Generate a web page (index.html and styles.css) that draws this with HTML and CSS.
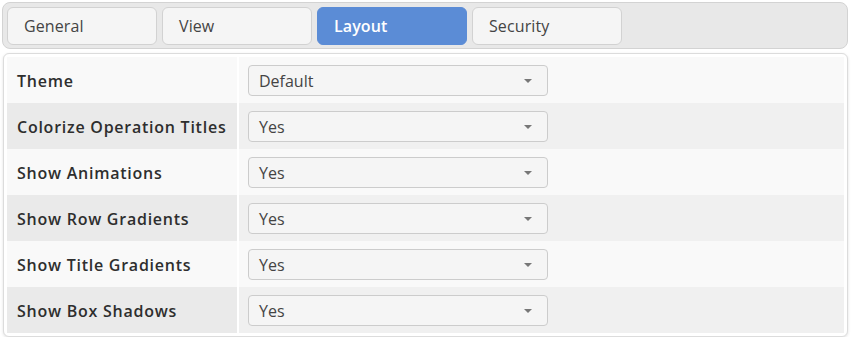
FILE: index.html
```html
<!DOCTYPE html>
<html>
<head>
<meta charset="utf-8">
<link rel="stylesheet" href="styles.css">
</head>
<body>
<div class="tabs">
  <div class="tab">General</div>
  <div class="tab">View</div>
  <div class="tab active">Layout</div>
  <div class="tab">Security</div>
</div>
<div class="panel">
  <div class="row">
    <div class="label">Theme</div>
    <div class="value"><div class="select"><span>Default</span><span class="arrow"></span></div></div>
  </div>
  <div class="row alt">
    <div class="label">Colorize Operation Titles</div>
    <div class="value"><div class="select"><span>Yes</span><span class="arrow"></span></div></div>
  </div>
  <div class="row">
    <div class="label">Show Animations</div>
    <div class="value"><div class="select"><span>Yes</span><span class="arrow"></span></div></div>
  </div>
  <div class="row alt">
    <div class="label">Show Row Gradients</div>
    <div class="value"><div class="select"><span>Yes</span><span class="arrow"></span></div></div>
  </div>
  <div class="row">
    <div class="label">Show Title Gradients</div>
    <div class="value"><div class="select"><span>Yes</span><span class="arrow"></span></div></div>
  </div>
  <div class="row alt">
    <div class="label">Show Box Shadows</div>
    <div class="value"><div class="select"><span>Yes</span><span class="arrow"></span></div></div>
  </div>
</div>
</body>
</html>
```
FILE: styles.css
```css
html, body {
  margin: 0;
  padding: 0;
  background: #ffffff;
  font-family: "Open Sans", "Noto Sans", sans-serif;
  color: #333;
}
body {
  padding: 2px 6px 0 2px;
}
.tabs {
  display: flex;
  gap: 5px;
  padding: 4px 4px 3px 4px;
  background: #e8e8e8;
  border: 1px solid #d3d3d3;
  border-radius: 8px;
}
.tab {
  box-sizing: border-box;
  width: 150px;
  height: 38px;
  padding-left: 16px;
  display: flex;
  align-items: center;
  background: #f5f5f5;
  border: 1px solid #d2d2d2;
  border-radius: 6px;
  font-size: 16px;
  letter-spacing: 0.1px;
  color: #444;
}
.tab.active {
  background: #5b8cd6;
  border-color: #5b8cd6;
  color: #fff;
  font-weight: 600;
}
.panel {
  margin: 4px 0 0 1px;
  padding: 3px 3px 3px 3px;
  background: #fff;
  border: 1px solid #dcdcdc;
  border-radius: 6px;
  box-shadow: 0 1px 3px rgba(0,0,0,0.12);
}
.row {
  display: flex;
  height: 46px;
  background: #f9f9f9;
}
.row.alt {
  background: #f0f0f0;
}
.label {
  box-sizing: border-box;
  width: 232px;
  padding-left: 10px;
  padding-top: 1px;
  display: flex;
  align-items: center;
  font-size: 16px;
  font-weight: 600;
  letter-spacing: 0.75px;
  color: #2e2e2e;
  border-right: 2px solid #fff;
}
.row.alt .label {
  background: #eaeaea;
}
.value {
  flex: 1;
  display: flex;
  align-items: center;
  padding-left: 9px;
  padding-top: 1px;
}
.select {
  box-sizing: border-box;
  width: 300px;
  height: 31px;
  display: flex;
  align-items: center;
  justify-content: space-between;
  padding: 0 15px 0 10px;
  background: #f5f5f5;
  border: 1px solid #cccccc;
  border-radius: 4px;
  font-size: 16px;
  color: #444;
}
.arrow {
  width: 0;
  height: 0;
  border-left: 4px solid transparent;
  border-right: 4px solid transparent;
  border-top: 4px solid #777;
}
```
